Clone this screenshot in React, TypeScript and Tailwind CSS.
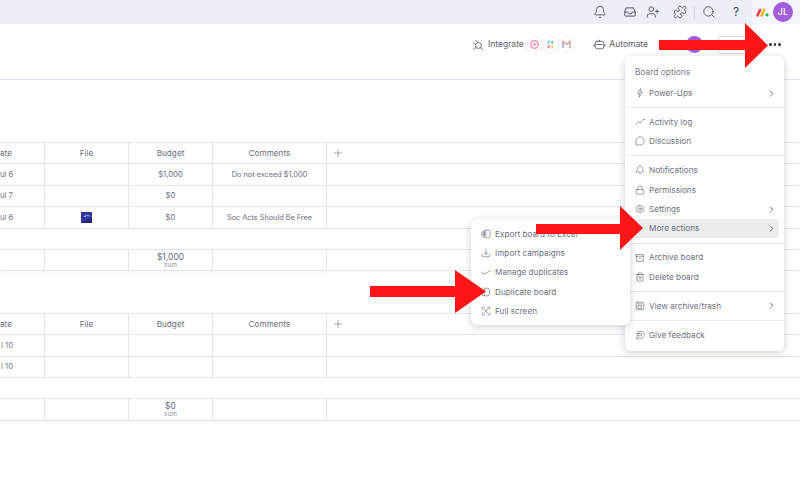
import React from "react";
import {
  Bell, UserPlus, Puzzle, Search, ChevronRight, MessageCircle,
  Lock, Settings, Trash2, Download, Plus,
} from "lucide-react";

const font = "font-['Inter','Noto_Sans',sans-serif]";

function Arrow({ className, w, h, shaftTop, shaftBottom, base }: { className: string; w: number; h: number; shaftTop: number; shaftBottom: number; base: number }) {
  return (
    <svg className={className} width={w} height={h} viewBox={`0 0 ${w} ${h}`}>
      <polygon fill="#fe1616" points={`0,${shaftTop} ${base},${shaftTop} ${base},0 ${w},${h / 2} ${base},${h} ${base},${shaftBottom} 0,${shaftBottom}`} />
    </svg>
  );
}

function Row({ cells, h = "h-[21.5px]" }: { cells: React.ReactNode[]; h?: string }) {
  return (
    <div className={`grid grid-cols-[45px_84px_84px_114px_1fr] ${h} border-b border-[#e1e3f2] text-[7.7px] text-[#6b6c7c]`}>
      {cells.map((c, i) => (
        <div key={i} className={`flex flex-col items-center justify-center pt-[1px] leading-none overflow-hidden whitespace-nowrap ${i < 4 ? "border-r border-[#e1e3f2]" : ""}`}>{c}</div>
      ))}
    </div>
  );
}

function Header({ first }: { first: string }) {
  return (
    <div className="grid grid-cols-[45px_84px_84px_114px_1fr] h-[22px] border-y border-[#e1e3f2] text-[8.2px] text-[#6b6c7c]">
      <div className="border-r border-[#e1e3f2] flex items-center overflow-hidden"><span className="w-full pr-[33px] text-right">{first}</span></div>
      <div className="border-r border-[#e1e3f2] flex items-center justify-center">File</div>
      <div className="border-r border-[#e1e3f2] flex items-center justify-center">Budget</div>
      <div className="border-r border-[#e1e3f2] flex items-center justify-center">Comments</div>
      <div className="flex items-center pl-[5px]"><Plus size={12} strokeWidth={1.2} /></div>
    </div>
  );
}

function DateCell({ t, pr = "pr-[33px]" }: { t: string; pr?: string }) {
  return <span className={`w-full text-right whitespace-nowrap text-[#77788a] ${pr}`}>{t}</span>;
}

function Comment({ t }: { t: string }) {
  return <span className="text-[7.3px]">{t}</span>;
}

function Sum({ v }: { v: string }) {
  return (
    <div className="flex flex-col items-center pt-[1px]">
      <span className="text-[8.5px] leading-[9px]">{v}</span>
      <span className="text-[6.5px] leading-[7px] text-[#8b8c9c]">sum</span>
    </div>
  );
}

type IconProps = { size?: number; strokeWidth?: number; className?: string };
const svgBase = { viewBox: "0 0 24 24", fill: "none", stroke: "currentColor", strokeLinecap: "round", strokeLinejoin: "round" } as const;

const PowerIcon = ({ size, strokeWidth, className }: IconProps) => (
  <svg {...svgBase} width={size} height={size} strokeWidth={strokeWidth} className={className}><path d="M13 2L6 13h5l-1 9 8-12h-5z" /></svg>
);
const ActivityIcon = ({ size, strokeWidth, className }: IconProps) => (
  <svg {...svgBase} width={size} height={size} strokeWidth={strokeWidth} className={className}><path d="M2 18l6-7 4 4 5-7" /><circle cx="21" cy="6" r="1" /></svg>
);
const ArchiveIcon = ({ size, strokeWidth, className }: IconProps) => (
  <svg {...svgBase} width={size} height={size} strokeWidth={strokeWidth} className={className}><rect x="3" y="4" width="18" height="4" /><path d="M4 8v12h16V8" /><path d="M10 13h4" /></svg>
);
const TrashBoxIcon = ({ size, strokeWidth, className }: IconProps) => (
  <svg {...svgBase} width={size} height={size} strokeWidth={strokeWidth} className={className}><rect x="3" y="3" width="18" height="18" rx="2" /><rect x="8" y="11" width="8" height="7" /><path d="M7 7h10" /></svg>
);
const FeedbackIcon = ({ size, strokeWidth, className }: IconProps) => (
  <svg {...svgBase} width={size} height={size} strokeWidth={strokeWidth} className={className}><path d="M4 21l1.500-5A9 9 0 1 1 9 19.500z" /><rect x="8" y="8" width="8" height="6" rx="1" /></svg>
);
const ExportIcon = ({ size, strokeWidth, className }: IconProps) => (
  <svg {...svgBase} width={size} height={size} strokeWidth={strokeWidth} className={className}><rect x="8" y="3" width="14" height="18" rx="2" /><rect x="2" y="7" width="10" height="10" rx="1" /><path d="M5 10l4 4M9 10l-4 4" /></svg>
);
const DupCheckIcon = ({ size, strokeWidth, className }: IconProps) => (
  <svg {...svgBase} width={size} height={size} strokeWidth={strokeWidth} className={className}><path d="M2 13l6 4L22 9" /></svg>
);
const DuplicateIcon = ({ size, strokeWidth, className }: IconProps) => (
  <svg {...svgBase} width={size} height={size} strokeWidth={strokeWidth} className={className}><path d="M9 3h8a3 3 0 0 1 3 3v12a3 3 0 0 1-3 3H9z" /><path d="M9 7H6a3 3 0 0 0-3 3v8a3 3 0 0 0 3 3h3" /></svg>
);
const FullIcon = ({ size, strokeWidth, className }: IconProps) => (
  <svg {...svgBase} width={size} height={size} strokeWidth={strokeWidth} className={className}><path d="M3 8V3h5M21 8V3h-5M3 16v5h5M21 16v5h-5" /><path d="M8 8l3 3M16 8l-3 3M8 16l3-3M16 16l-3-3" /></svg>
);
const InboxIcon = ({ size, strokeWidth, className }: IconProps) => (
  <svg {...svgBase} width={size} height={size} strokeWidth={strokeWidth} className={className}><path d="M6 5h12l3 7v6a1 1 0 0 1-1 1H4a1 1 0 0 1-1-1v-6z" /><path d="M3 12h5l1.500 3h5l1.500-3h5" /></svg>
);
const IntegrateIcon = ({ size, strokeWidth, className }: IconProps) => (
  <svg {...svgBase} width={size} height={size} strokeWidth={strokeWidth} className={className}><circle cx="13" cy="13" r="6" /><path d="M3 21l5.500-4M8 3l3 4M3 8l4 2.500M21 21l-3-3" /></svg>
);
const BotIcon = ({ size, strokeWidth, className }: IconProps) => (
  <svg {...svgBase} width={size} height={size} strokeWidth={strokeWidth} className={className}><rect x="4" y="6" width="16" height="14" rx="4" /><path d="M2 12v3M22 12v3M7 12h10" /><path d="M12 6V4" /></svg>
);

function MoreActionsIcon() {
  return <span className="w-[10px] shrink-0" />;
}

function Item({ icon: I, label, chevron, active }: { icon: any; label: string; chevron?: boolean; active?: boolean }) {
  return (
    <div className={`flex items-center h-[19.4px] mx-[5px] pl-[5px] pr-[2px] rounded-[3px] ${active ? "bg-[#ececec]" : ""}`}>
      <I size={10} strokeWidth={1.5} className="text-[#66677a] shrink-0" />
      <span className="ml-[4px] text-[8.2px] text-[#6f7080] whitespace-nowrap">{label}</span>
      {chevron && <ChevronRight size={11} strokeWidth={1.8} className="ml-auto text-[#55566a]" />}
    </div>
  );
}

const Div = () => <div className="my-[4.3px] h-px bg-[#eaebf3]" />;

function Hex({ children }: { children: React.ReactNode }) {
  return (
    <svg width="17" height="19" viewBox="0 0 17 19" className="-mx-[0.5px]">
      <polygon points="8.5,0.8 16,5 16,14 8.5,18.2 1,14 1,5" fill="#fff" stroke="#eeeff5" strokeWidth="1" />
      {children}
    </svg>
  );
}

export default function App() {
  return (
    <div className={`relative w-[800px] h-[480px] overflow-hidden bg-white ${font}`}>
      {/* top bar */}
      <div className="flex h-6 items-center bg-[#eceff8] text-[#45465a]">
        <div className="ml-auto flex items-center">
          <Bell size={14} strokeWidth={1.4} className="mr-[16px]" />
          <InboxIcon size={14} strokeWidth={1.5} className="mr-[9px]" />
          <UserPlus size={14} strokeWidth={1.4} className="mr-[13px]" />
          <Puzzle size={14} strokeWidth={1.4} className="mr-[7px]" />
          <div className="h-[13px] w-px bg-[#d5d7e3] mr-[7px]" />
          <Search size={14} strokeWidth={1.4} className="mr-[13px]" />
          <span className="text-[12px] leading-none mr-[9px] w-[14px] text-center">?</span>
          <div className="flex h-6 items-center bg-[#f5f6fb] pl-[4px] pr-[7px]">
            <svg width="13" height="9" viewBox="0 0 13 9" className="mr-[4px]">
              <line x1="1.5" y1="7.5" x2="4" y2="2" stroke="#f0384f" strokeWidth="2.6" strokeLinecap="round" />
              <line x1="5.6" y1="7.5" x2="8" y2="2" stroke="#fcb900" strokeWidth="2.6" strokeLinecap="round" />
              <circle cx="11" cy="6.8" r="1.6" fill="#25b360" />
            </svg>
            <div className="flex h-[20px] w-[20px] items-center justify-center rounded-full bg-[#a25ddc] text-[9px] font-medium text-white">JL</div>
          </div>
        </div>
      </div>

      {/* toolbar */}
      <div className="flex h-[56px] items-start border-b border-[#e1e3f2] pt-[11px] text-[8.5px] text-[#5f6070]">
        <div className="ml-[472px] flex h-[19px] items-center">
          <IntegrateIcon size={12} strokeWidth={1.6} className="mr-[4px] text-[#55566a]" />
          <span className="mr-[2.5px]">Integrate</span>
          <Hex>
            <circle cx="8.5" cy="9.5" r="3.8" fill="none" stroke="#ff8fa8" strokeWidth="1.4" />
            <circle cx="8.5" cy="9.5" r="1.4" fill="#ff8fa8" />
          </Hex>
          <Hex>
            <rect x="5.5" y="5.5" width="2.4" height="3.4" rx="1" fill="#7dd3ec" />
            <rect x="9" y="5.5" width="2.4" height="3.4" rx="1" fill="#7fd0a8" />
            <rect x="5.5" y="10" width="2.4" height="3.4" rx="1" fill="#ee8aa8" />
            <rect x="9" y="10" width="2.4" height="3.4" rx="1" fill="#f0cf80" />
          </Hex>
          <Hex>
            <path d="M5 13V6.500L8.500 9.500L12 6.500V13" fill="none" stroke="#f08c82" strokeWidth="1.3" />
            <path d="M5 13V7" stroke="#8fb4f4" strokeWidth="1.3" />
            <path d="M12 13V7" stroke="#8fd4a6" strokeWidth="1.3" />
          </Hex>
          <BotIcon size={13} strokeWidth={1.6} className="ml-[19px] mr-[3px] text-[#55566a]" />
          <span>Automate</span>
          <div className="ml-[38px] h-[17px] w-[17px] rounded-full bg-[#a25ddc]" />
          <div className="ml-[14px] h-[18px] w-[34px] rounded-[3px] border border-[#d9dae5] bg-white" />
        </div>
      </div>

      {/* boards */}
      <div className="pt-[62px]">
        <Header first="ate" />
        <Row cells={[<DateCell t="ul 6" />, "", "$1,000", <Comment t="Do not exceed $1,000" />, ""]} />
        <Row cells={[<DateCell t="ul 7" />, "", "$0", "", ""]} />
        <Row cells={[<DateCell t="ul 6" />,
          <svg width="11" height="11" viewBox="0 0 11 11"><rect width="11" height="11" fill="#34359e" /><path d="M2.500 4.500Q5 2.500 8.500 3.500L8.500 4.500Q6 3.500 4 5z" fill="#c3ccf2" /><path d="M0 11L11 6V11z" fill="#25257f" /></svg>,
          "$0", <Comment t="Soc Acts Should Be Free" />, ""]} />
        <div className="h-[21px] border-b border-[#e1e3f2]" />
        <div className="relative">
          <Row cells={["", "", <Sum v="$1,000" />, "", ""]} />
          <div className="absolute bottom-0 left-0 h-px w-[326px] shadow-[0_2px_3px_rgba(0,0,0,0.08)]" />
        </div>
      </div>
      <div className="pt-[42px]">
        <Header first="ate" />
        <Row cells={[<DateCell t="l 10" pr="pr-[31px]" />, "", "", "", ""]} />
        <Row cells={[<DateCell t="l 10" pr="pr-[31px]" />, "", "", "", ""]} />
        <div className="h-[21px] border-b border-[#e1e3f2]" />
        <div className="relative">
          <Row cells={["", "", <Sum v="$0" />, "", ""]} />
          <div className="absolute bottom-0 left-0 h-px w-[326px] shadow-[0_2px_3px_rgba(0,0,0,0.08)]" />
        </div>
      </div>

      {/* board options menu */}
      <div className="absolute left-[625px] top-[56px] w-[159px] rounded-md bg-white pt-[6px] pb-[6px] shadow-[0_2px_10px_rgba(0,0,0,0.18)]">
        <div className="flex h-[21.4px] items-center pl-[10px] text-[8.4px] text-[#7b7c8c]">Board options</div>
        <Item icon={PowerIcon} label="Power-Ups" chevron />
        <Div />
        <Item icon={ActivityIcon} label="Activity log" />
        <Item icon={MessageCircle} label="Discussion" />
        <Div />
        <Item icon={Bell} label="Notifications" />
        <Item icon={Lock} label="Permissions" />
        <Item icon={Settings} label="Settings" chevron />
        <Item icon={MoreActionsIcon} label="More actions" chevron active />
        <Div />
        <Item icon={ArchiveIcon} label="Archive board" />
        <Item icon={Trash2} label="Delete board" />
        <Div />
        <Item icon={TrashBoxIcon} label="View archive/trash" chevron />
        <Div />
        <Item icon={FeedbackIcon} label="Give feedback" />
      </div>

      {/* more-actions submenu */}
      <div className="absolute left-[471px] top-[219px] w-[159px] rounded-md bg-white pt-[5px] pb-[4px] shadow-[0_2px_10px_rgba(0,0,0,0.18)]">
        <Item icon={ExportIcon} label="Export board to Excel" />
        <Item icon={Download} label="Import campaigns" />
        <Item icon={DupCheckIcon} label="Manage duplicates" />
        <Item icon={DuplicateIcon} label="Duplicate board" />
        <Item icon={FullIcon} label="Full screen" />
      </div>

      {/* three dots */}
      <div className="absolute left-[769px] top-[43px] flex gap-[2px]">
        <div className="h-[2.5px] w-[2.5px] rounded-full bg-[#323338]" />
        <div className="h-[2.5px] w-[2.5px] rounded-full bg-[#323338]" />
        <div className="h-[2.5px] w-[2.5px] rounded-full bg-[#323338]" />
      </div>

      {/* red annotation arrows */}
      <Arrow className="absolute left-[659px] top-[23px]" w={109} h={45} shaftTop={17} shaftBottom={27} base={86} />
      <Arrow className="absolute left-[536px] top-[206px]" w={107} h={44} shaftTop={18} shaftBottom={28} base={84} />
      <Arrow className="absolute left-[370px] top-[270px]" w={116} h={43} shaftTop={16} shaftBottom={27} base={85} />
    </div>
  );
}
